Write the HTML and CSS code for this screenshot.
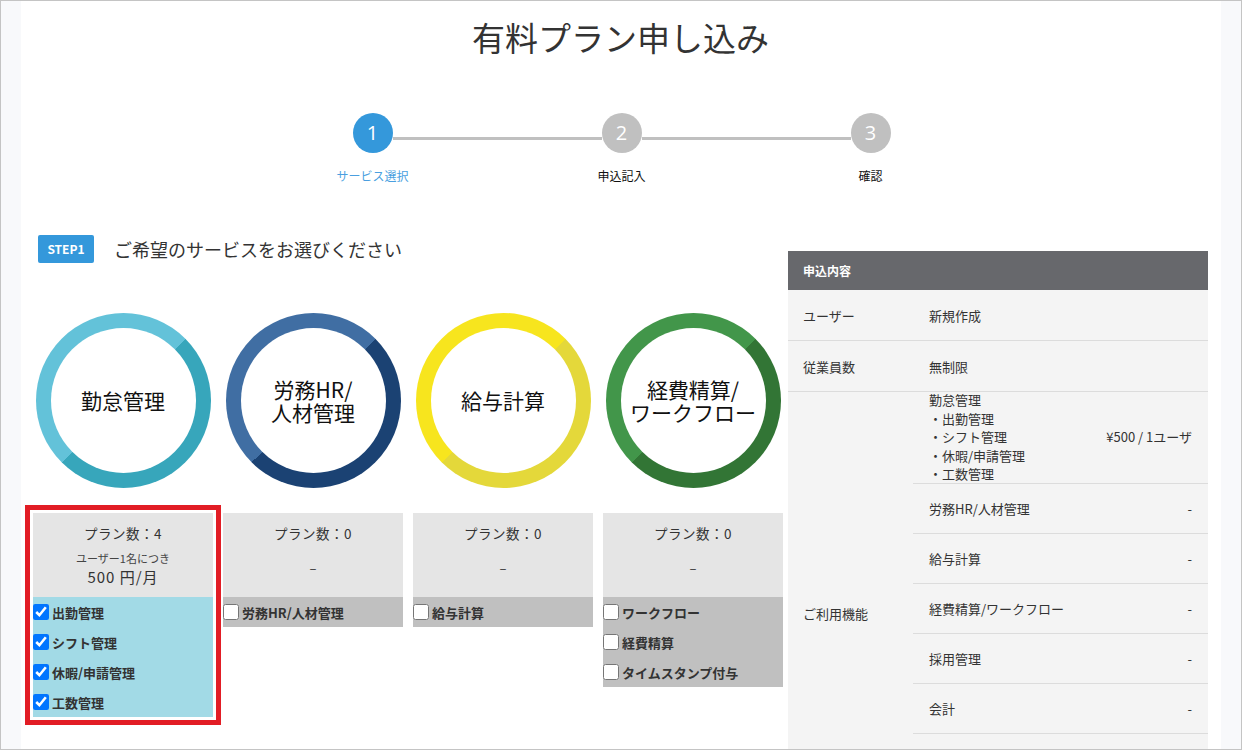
FILE: index.html
```html
<!DOCTYPE html>
<html lang="ja">
<head>
    <meta charset="UTF-8">
    <meta name="viewport" content="width=device-width, initial-scale=1.0">
    <title>有料プラン申し込み</title>
    <link rel="stylesheet" href="styles.css">
</head>
<body>
    <div class="page">
        <h1>有料プラン申し込み</h1>

        <div class="stepper">
            <div class="step active">
                <div class="step-num">1</div>
                <div class="step-label">サービス選択</div>
            </div>
            <div class="step-line"></div>
            <div class="step">
                <div class="step-num">2</div>
                <div class="step-label">申込記入</div>
            </div>
            <div class="step-line"></div>
            <div class="step">
                <div class="step-num">3</div>
                <div class="step-label">確認</div>
            </div>
        </div>

        <div class="main">
            <div class="services">
                <div class="step-head">
                    <span class="badge">STEP1</span>
                    <h2>ご希望のサービスをお選びください</h2>
                </div>

                <div class="rings">
                    <div class="ring kintai"><div class="ring-inner">勤怠管理</div></div>
                    <div class="ring roumu"><div class="ring-inner">労務HR/<br>人材管理</div></div>
                    <div class="ring kyuyo"><div class="ring-inner">給与計算</div></div>
                    <div class="ring keihi"><div class="ring-inner">経費精算/<br>ワークフロー</div></div>
                </div>

                <div class="plans">
                    <div class="plan selected">
                        <div class="plan-top">
                            <div class="plan-count">プラン数：4</div>
                            <div class="plan-price">
                                <div class="per-user">ユーザー1名につき</div>
                                <div class="amount">500 円/月</div>
                            </div>
                        </div>
                        <div class="plan-options on">
                            <label class="option"><input type="checkbox" checked>出勤管理</label>
                            <label class="option"><input type="checkbox" checked>シフト管理</label>
                            <label class="option"><input type="checkbox" checked>休暇/申請管理</label>
                            <label class="option"><input type="checkbox" checked>工数管理</label>
                        </div>
                    </div>

                    <div class="plan">
                        <div class="plan-top">
                            <div class="plan-count">プラン数：0</div>
                            <div class="plan-price"><div class="dash">–</div></div>
                        </div>
                        <div class="plan-options">
                            <label class="option"><input type="checkbox">労務HR/人材管理</label>
                        </div>
                    </div>

                    <div class="plan">
                        <div class="plan-top">
                            <div class="plan-count">プラン数：0</div>
                            <div class="plan-price"><div class="dash">–</div></div>
                        </div>
                        <div class="plan-options">
                            <label class="option"><input type="checkbox">給与計算</label>
                        </div>
                    </div>

                    <div class="plan">
                        <div class="plan-top">
                            <div class="plan-count">プラン数：0</div>
                            <div class="plan-price"><div class="dash">–</div></div>
                        </div>
                        <div class="plan-options">
                            <label class="option"><input type="checkbox">ワークフロー</label>
                            <label class="option"><input type="checkbox">経費精算</label>
                            <label class="option"><input type="checkbox">タイムスタンプ付与</label>
                        </div>
                    </div>
                </div>
            </div>

            <div class="summary">
                <div class="summary-head">申込内容</div>
                <div class="summary-row">
                    <div class="summary-label">ユーザー</div>
                    <div class="summary-value">新規作成</div>
                </div>
                <div class="summary-row">
                    <div class="summary-label">従業員数</div>
                    <div class="summary-value">無制限</div>
                </div>
                <div class="summary-row features">
                    <div class="summary-label">ご利用機能</div>
                    <div class="feature-list">
                        <div class="feature first">
                            <div class="feature-name">
                                勤怠管理<br>
                                ・出勤管理<br>
                                ・シフト管理<br>
                                ・休暇/申請管理<br>
                                ・工数管理
                            </div>
                            <div class="feature-price">¥500 / 1ユーザ</div>
                        </div>
                        <div class="feature"><span>労務HR/人材管理</span><span>-</span></div>
                        <div class="feature"><span>給与計算</span><span>-</span></div>
                        <div class="feature"><span>経費精算/ワークフロー</span><span>-</span></div>
                        <div class="feature"><span>採用管理</span><span>-</span></div>
                        <div class="feature"><span>会計</span><span>-</span></div>
                    </div>
                </div>
            </div>
        </div>
    </div>
</body>
</html>
```

FILE: styles.css
```css
html, body {
    margin: 0;
    padding: 0;
}
body {
    height: 750px;
    box-sizing: border-box;
    border: 1px solid #c4c4c4;
    background-color: #f8f9fb;
    overflow: hidden;
    font-family: "Noto Sans CJK JP", "Noto Sans", sans-serif;
    color: #333;
}
.page {
    width: 1200px;
    min-height: 100%;
    margin: 0 auto;
    padding: 0 13px 0 12px;
    box-sizing: border-box;
    background-color: #fff;
}
h1 {
    margin: 0;
    padding-top: 17px;
    font-size: 33px;
    line-height: 38px;
    font-weight: normal;
    text-align: center;
    color: #333;
}

/* stepper */
.stepper {
    display: flex;
    width: 538px;
    margin: 57px auto 0;
    padding-left: 2px;
}
.step {
    display: flex;
    flex-direction: column;
    align-items: center;
    width: 40px;
}
.step-num {
    width: 40px;
    height: 40px;
    border-radius: 50%;
    background-color: #c0c0c0;
    color: #fff;
    font-family: "Open Sans", sans-serif;
    font-size: 20px;
    line-height: 40px;
    text-align: center;
}
.step-label {
    margin-top: 14px;
    font-size: 12px;
    line-height: 17px;
    white-space: nowrap;
    color: #111;
}
.step.active .step-num {
    background-color: #3498db;
}
.step.active .step-label {
    color: #4a9fe0;
}
.step-line {
    flex: 1;
    height: 3px;
    margin: 24px 0 0;
    background-color: #c0c0c0;
}

/* main */
.main {
    display: flex;
    gap: 5px;
    margin-top: 51px;
}
.services {
    width: 750px;
}
.step-head {
    display: flex;
    align-items: center;
    gap: 20px;
    margin-left: 5px;
    height: 28px;
}
.badge {
    display: inline-block;
    width: 56px;
    height: 28px;
    line-height: 28px;
    border-radius: 2px;
    background-color: #3498db;
    color: #fff;
    font-size: 12px;
    font-weight: bold;
    text-align: center;
}
.step-head h2 {
    margin: 0;
    font-size: 18px;
    font-weight: normal;
    color: #333;
}

.rings {
    display: grid;
    grid-template-columns: repeat(4, 180px);
    gap: 10px;
    margin-top: 50px;
}
.ring {
    justify-self: center;
    width: 175px;
    height: 175px;
    padding: 15px;
    box-sizing: border-box;
    border-radius: 50%;
}
.ring-inner {
    display: flex;
    align-items: center;
    justify-content: center;
    height: 100%;
    border-radius: 50%;
    background-color: #fff;
    color: #111;
    font-size: 21px;
    line-height: 23px;
    text-align: center;
}
.kintai { background: conic-gradient(from 45deg, #37a6bb 0 50%, #63c2d9 50% 100%); }
.roumu { background: conic-gradient(from 45deg, #1b4273 0 50%, #406ea3 50% 100%); }
.kyuyo { background: conic-gradient(from 45deg, #e4d83a 0 50%, #f7e51e 50% 100%); }
.keihi { background: conic-gradient(from 45deg, #327535 0 50%, #42964a 50% 100%); }

.plans {
    display: grid;
    grid-template-columns: repeat(4, 180px);
    gap: 10px;
    align-items: start;
    margin-top: 25px;
}
.plan.selected {
    outline: 5px solid #e21d25;
    outline-offset: 3px;
}
.plan-top {
    display: flex;
    flex-direction: column;
    height: 84px;
    padding: 11px 0 4px;
    box-sizing: border-box;
    background-color: #e5e5e5;
    text-align: center;
}
.plan-count {
    font-size: 13.5px;
    line-height: 18px;
    letter-spacing: 0.5px;
}
.plan-price {
    flex: 1;
    display: flex;
    flex-direction: column;
    justify-content: center;
}
.per-user {
    font-size: 11px;
    line-height: 17px;
    color: #444;
}
.amount {
    font-size: 15px;
    line-height: 19px;
    letter-spacing: 1px;
}
.dash {
    font-size: 13px;
}
.plan-options {
    background-color: #c0c0c0;
}
.plan-options.on {
    background-color: #a2dae6;
}
.option {
    display: flex;
    align-items: center;
    height: 30px;
    font-size: 13px;
    font-weight: bold;
    color: #333;
}
.option input {
    width: 16px;
    height: 16px;
    margin: 0 3px 0 0;
}

/* summary */
.summary {
    width: 420px;
    margin-top: 16px;
    background-color: #f4f4f4;
    font-size: 13px;
}
.summary-head {
    height: 39px;
    line-height: 39px;
    padding-left: 15px;
    background-color: #67686c;
    color: #fff;
    font-size: 12px;
    font-weight: bold;
}
.summary-row {
    display: flex;
    align-items: center;
    min-height: 51px;
    box-sizing: border-box;
    border-bottom: 1px solid #dcdcdc;
}
.summary-label {
    width: 125px;
    padding-left: 15px;
    box-sizing: border-box;
}
.summary-value {
    padding-left: 16px;
}
.summary-row.features {
    border-bottom: none;
}
.feature-list {
    flex: 1;
    padding-bottom: 100px;
}
.feature {
    display: flex;
    align-items: center;
    justify-content: space-between;
    height: 50px;
    padding: 0 16px;
    box-sizing: border-box;
    border-bottom: 1px solid #dcdcdc;
}
.feature.first {
    height: 92px;
    line-height: 18.4px;
}
```
